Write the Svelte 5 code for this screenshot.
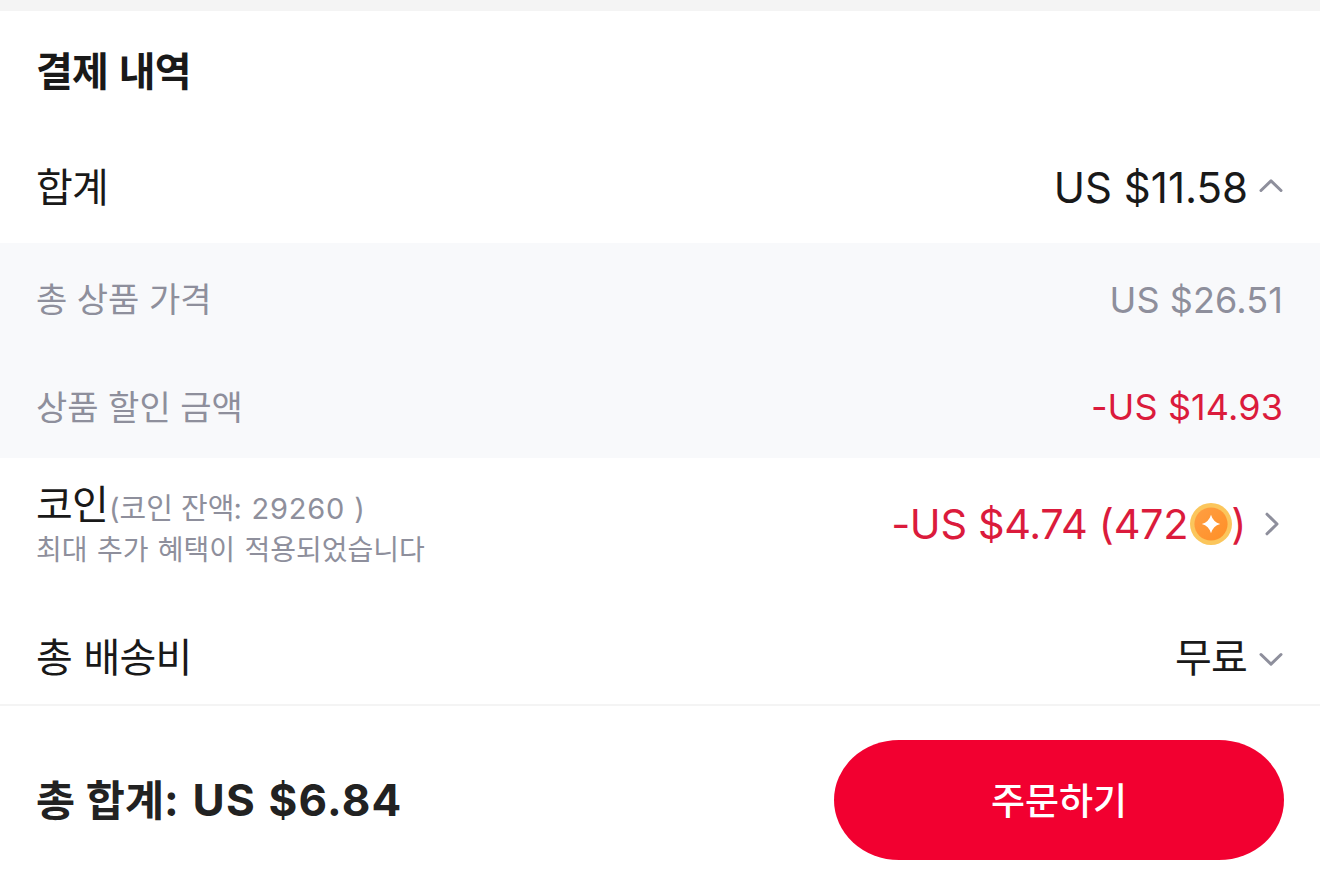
<script>
let sumOpen = true;

const details = [
    {label: '총 상품 가격', value: 'US $26.51'},
    {label: '상품 할인 금액', value: '-US $14.93', discount: true},
];
</script>

<main>
  <section class="payment">
    <h2>결제 내역</h2>
    <div class="row sum">
      <span class="label">합계</span>
      <button class="amount" on:click={() => sumOpen = !sumOpen}>
        <span class="price">US $11.58</span>
        <svg class="chevron" class:down={!sumOpen} viewBox="0 0 24 16"><path d="M2 12.5 12 2.8 22 12.5"/></svg>
      </button>
    </div>
    {#if sumOpen}
      <div class="details">
        {#each details as d}
          <div class="row">
            <span class="name">{d.label}</span>
            <span class="value" class:discount={d.discount}>{d.value}</span>
          </div>
        {/each}
      </div>
    {/if}
    <div class="row coins">
      <div>
        <div class="coin-title"><span class="label">코인</span><span class="balance">(코인 잔액<span class="num">: 29260 )</span></span></div>
        <p>최대 추가 혜택이 적용되었습니다</p>
      </div>
      <button class="amount discount">
        <span class="price">-US $4.74 (472</span>
        <svg class="coin" viewBox="0 0 42 42">
          <defs>
            <linearGradient id="gold" x1="0" y1="0" x2="1" y2="1">
              <stop offset="0" stop-color="#ff9f43"/>
              <stop offset="1" stop-color="#ff8f26"/>
            </linearGradient>
          </defs>
          <circle cx="21" cy="21" r="21" fill="#fbc65c"/>
          <circle cx="21" cy="21" r="16.6" fill="url(#gold)"/>
          <path d="M21 11.8Q23 19 30.2 21Q23 23 21 30.2Q19 23 11.8 21Q19 19 21 11.8Z" fill="#fff"/>
        </svg>
        <span class="price">)</span>
        <svg class="chevron next" viewBox="0 0 16 24"><path d="M3 2.2 13 12 3 21.8"/></svg>
      </button>
    </div>
    <div class="row shipping">
      <span class="label">총 배송비</span>
      <button class="amount">
        <span class="label">무료</span>
        <svg class="chevron down" viewBox="0 0 24 16"><path d="M2 12.5 12 2.8 22 12.5"/></svg>
      </button>
    </div>
  </section>
  <footer>
    <div class="total"><span>총 합계</span><span class="num">: US $6.84</span></div>
    <button class="order">주문하기</button>
  </footer>
</main>

<style>
:global(body) {
  background: #fff;
}
main {
  width: 1320px;
  height: 896px;
  overflow: hidden;
  color: #191919;
  font-family: Inter, "Noto Sans CJK KR", sans-serif;
  font-feature-settings: "calt" 0;
  border-top: 11px solid #f4f4f4;
  box-sizing: border-box;
  display: flex;
  flex-direction: column;
}
button {
  border: 0;
  padding: 0;
  background: none;
  color: inherit;
  font: inherit;
  font-feature-settings: "calt" 0;
}
h2 {
  margin: 0;
  padding: 0 36px;
  height: 120px;
  line-height: 121px;
  font-size: 40px;
  font-weight: 700;
  letter-spacing: -0.8px;
  word-spacing: 2px;
}
.row {
  display: flex;
  align-items: center;
  justify-content: space-between;
  padding: 0 37px 0 36px;
}
.sum {
  height: 112px;
}
.label {
  font-size: 40px;
  letter-spacing: -0.8px;
  word-spacing: 1px;
  padding-bottom: 4px;
}
.amount {
  display: flex;
  align-items: center;
}
.price {
  font-size: 42px;
}
.chevron {
  width: 24px;
  height: 16px;
  margin-left: 12px;
  fill: none;
  stroke: #8e8f9c;
  stroke-width: 3;
  stroke-linecap: round;
  stroke-linejoin: round;
}
.sum .chevron {
  margin: 0 0 2px 11px;
}
.chevron.down {
  transform: scaleY(-1);
}
.shipping .chevron {
  margin-top: 4px;
}
.chevron.next {
  width: 16px;
  height: 24px;
  margin: 0 3px 0 18px;
}
.details {
  background: #f8f9fb;
  color: #8e8f9c;
  font-size: 34px;
}
.details .row {
  height: 107.5px;
  padding-right: 37px;
}
.name {
  padding-top: 2px;
}
.value {
  font-size: 36px;
  padding-top: 6px;
  letter-spacing: 0.1px;
}
.discount {
  color: #db1b3c;
}
.coins {
  height: 152px;
  align-items: flex-start;
}
.coin-title {
  display: flex;
  align-items: baseline;
  height: 48px;
  line-height: 48px;
  padding-top: 23px;
}
.balance {
  color: #8e8f9c;
  font-size: 29px;
  margin-left: 1px;
  padding-top: 1px;
}
.balance .num {
  letter-spacing: 0.8px;
  margin-left: -1px;
}
.coins p {
  margin: 0;
  color: #8e8f9c;
  font-size: 28px;
  line-height: 42px;
  word-spacing: 1.5px;
}
.coins .amount {
  height: 131px;
}
.coins .price {
  font-size: 41.5px;
  letter-spacing: -0.35px;
}
.coin {
  width: 42px;
  height: 42px;
  margin: 0 -1px 0 2px;
}
.shipping {
  height: 94px;
}
footer {
  flex: 1;
  display: flex;
  align-items: center;
  justify-content: space-between;
  padding: 0 36px 2px;
  border-top: 2px solid #f4f4f4;
}
.total {
  font-size: 42.5px;
  font-weight: 600;
  color: #222;
  padding-bottom: 5px;
}
.total .num {
  font-size: 44px;
  font-weight: 700;
  letter-spacing: 1.2px;
  word-spacing: 1px;
}
.order {
  width: 450px;
  height: 120px;
  padding-bottom: 3px;
  border-radius: 65px / 60px;
  background: #f20030;
  color: #fff;
  font-size: 37px;
  font-weight: 500;
}
</style>
